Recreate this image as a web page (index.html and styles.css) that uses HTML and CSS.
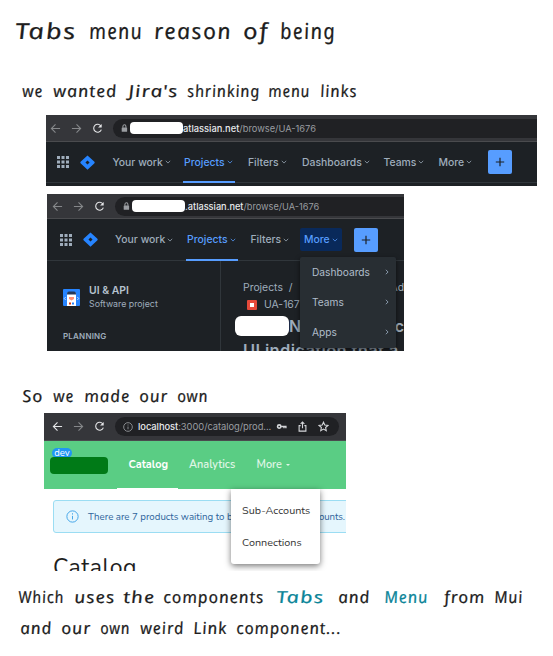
FILE: index.html
```html
<!DOCTYPE html>
<html lang="en">
<head>
<meta charset="utf-8">
<title>Tabs menu reason of being</title>
<link rel="stylesheet" href="styles.css">
</head>
<body>
<svg class="defs" width="0" height="0" aria-hidden="true">
  <symbol id="back" viewBox="0 0 12 12"><path d="M11 6H1.5M6 1.5 1.5 6 6 10.5"/></symbol>
  <symbol id="fwd" viewBox="0 0 12 12"><path d="M1 6h9.5M6 1.5 10.5 6 6 10.5"/></symbol>
  <symbol id="reload" viewBox="0 0 12 12"><path d="M9.8 3.4A4.3 4.3 0 1 0 10.2 7.2"/><path d="M10.6 1v4h-4z" fill="currentColor" stroke="none"/></symbol>
  <symbol id="lock" viewBox="0 0 8 10"><path d="M2.2 4V2.5a1.7 1.7 0 0 1 3.4 0V4"/><rect x=".8" y="3.8" width="6.2" height="5" rx=".6" fill="currentColor" stroke="none"/></symbol>
  <symbol id="chev" viewBox="0 0 6 6"><path d="M.8 1.8 3 4.1l2.2-2.3"/></symbol>
  <symbol id="chevr" viewBox="0 0 6 6"><path d="M1.8.8 4.1 3 1.8 5.2"/></symbol>
  <symbol id="apps" viewBox="0 0 12 12"><path fill="currentColor" stroke="none" d="M0 0h3v3H0zM4.5 0h3v3h-3zM9 0h3v3H9zM0 4.5h3v3H0zM4.5 4.5h3v3h-3zM9 4.5h3v3H9zM0 9h3v3H0zM4.5 9h3v3h-3zM9 9h3v3H9z"/></symbol>
  <symbol id="jira" viewBox="0 0 16 16"><path fill="#2684ff" stroke="none" fill-rule="evenodd" d="M8 .4 15.4 7.3q.6.7 0 1.4L8 15.6.6 8.7q-.6-.7 0-1.4zM8 5.8 5.8 8 8 10.2 10.2 8z"/></symbol>
  <symbol id="plus" viewBox="0 0 10 10"><path d="M5 .8v8.4M.8 5h8.4"/></symbol>
  <symbol id="info" viewBox="0 0 12 12"><circle cx="6" cy="6" r="5.2"/><path d="M6 5.4v3.3M6 3v1.2"/></symbol>
</svg>

<main class="board">
  <svg class="ink" width="553" height="60">
    <g class="words big" transform="translate(0 39) skewX(9)">
      <text x="16" textLength="62">Tabs</text><text x="90" textLength="54">menu</text><text x="155" textLength="78">reason</text><text x="244" textLength="26">of</text><text x="281" textLength="56">being</text>
    </g>
  </svg>
  <svg class="ink" width="553" height="55">
    <g class="words" transform="translate(0 37) skewX(9)">
      <text x="23" textLength="21">we</text><text x="54" textLength="64">wanted</text><text x="129" textLength="50">Jira's</text><text x="188" textLength="73">shrinking</text><text x="269" textLength="42">menu</text><text x="321" textLength="37">links</text>
    </g>
  </svg>

  <section class="shot wide">
    <div class="browser">
      <svg class="i"><use href="#back"/></svg><svg class="i"><use href="#fwd"/></svg><svg class="i lit"><use href="#reload"/></svg>
      <div class="address"><svg class="lock"><use href="#lock"/></svg><span class="redact"></span><span class="url"><b>atlassian.net</b>/browse/UA-1676</span></div>
    </div>
    <nav class="jnav">
      <svg class="apps"><use href="#apps"/></svg><svg class="jira"><use href="#jira"/></svg>
      <span>Your work<svg class="c"><use href="#chev"/></svg></span>
      <span class="on">Projects<svg class="c"><use href="#chev"/></svg></span>
      <span>Filters<svg class="c"><use href="#chev"/></svg></span>
      <span>Dashboards<svg class="c"><use href="#chev"/></svg></span>
      <span>Teams<svg class="c"><use href="#chev"/></svg></span>
      <span>More<svg class="c"><use href="#chev"/></svg></span>
      <div class="add"><svg><use href="#plus"/></svg></div>
    </nav>
  </section>

  <section class="shot narrow">
    <div class="browser">
      <svg class="i"><use href="#back"/></svg><svg class="i"><use href="#fwd"/></svg><svg class="i lit"><use href="#reload"/></svg>
      <div class="address"><svg class="lock"><use href="#lock"/></svg><span class="redact"></span><span class="url"><b>.atlassian.net</b>/browse/UA-1676</span></div>
    </div>
    <nav class="jnav">
      <svg class="apps"><use href="#apps"/></svg><svg class="jira"><use href="#jira"/></svg>
      <span>Your work<svg class="c"><use href="#chev"/></svg></span>
      <span class="on">Projects<svg class="c"><use href="#chev"/></svg></span>
      <span>Filters<svg class="c"><use href="#chev"/></svg></span>
      <span class="open">More<svg class="c"><use href="#chev"/></svg></span>
      <div class="add"><svg><use href="#plus"/></svg></div>
    </nav>
    <div class="jbody">
      <aside>
        <div class="project">
          <svg width="17" height="17" viewBox="0 0 17 17"><rect width="17" height="17" rx="1" fill="#2684ff"/><path d="M4 17V5q0-2 2-2h5q2 0 2 2v12z" fill="#fff"/><path d="M4 5.5v-1q0-2 2-2h5q2 0 2 2v1z" fill="#253858"/><path d="M6 8h5v2l-2.500 1.500L6 10z" fill="#ff8f73"/><path d="M6 13.500h2v2H6z" fill="#de350b"/><path d="M9 13.500h2v2H9z" fill="#2684ff"/><path d="M2.700 8 1.300 9.500 2.700 11M14.300 8l1.400 1.500-1.400 1.500" fill="none" stroke="#fff" stroke-width=".7"/></svg>
          <div><strong>UI &amp; API</strong><small>Software project</small></div>
        </div>
        <h4>PLANNING</h4>
      </aside>
      <div class="issue">
        <div class="crumbs"><span>Projects</span><span>/</span><span class="rest">Ad</span></div>
        <div class="key"><i></i><span>UA-167</span></div>
        <div class="summary"><span class="redact"></span><span>N</span><span class="tail">t c</span></div>
        <div class="summary second">UI indication that a</div>
      </div>
    </div>
    <div class="jmenu">
      <div>Dashboards<svg><use href="#chevr"/></svg></div>
      <div>Teams<svg><use href="#chevr"/></svg></div>
      <div>Apps<svg><use href="#chevr"/></svg></div>
    </div>
  </section>

  <svg class="ink" width="553" height="62">
    <g class="words" transform="translate(0 51) skewX(9)">
      <text x="23" textLength="21">So</text><text x="54" textLength="21">we</text><text x="85" textLength="46">made</text><text x="140" textLength="29">our</text><text x="178" textLength="31">own</text>
    </g>
  </svg>

  <section class="shot local">
    <div class="browser">
      <svg class="i lit"><use href="#back"/></svg><svg class="i"><use href="#fwd"/></svg><svg class="i lit"><use href="#reload"/></svg>
      <div class="address"><svg class="inf"><use href="#info"/></svg><span class="url"><b>localhost</b>:3000/catalog/prod...</span>
        <svg class="act" viewBox="0 0 12 12"><circle cx="3.5" cy="6" r="1.8" stroke-width="1.7"/><path d="M5.5 6h5.300v2M8.700 6v1.800" stroke-width="1.500"/></svg>
        <svg class="act" viewBox="0 0 12 12"><path d="M4 5H2.300v6h7.400V5H8M6 8V1.300M4 3.200l2-2 2 2"/></svg>
        <svg class="act" viewBox="0 0 12 12"><path d="m6 1.300 1.400 3.100 3.400.4-2.500 2.300.7 3.400L6 8.800l-3 1.700.7-3.400-2.500-2.300 3.400-.4z"/></svg>
      </div>
    </div>
    <nav class="gnav">
      <div class="brand"><em>dev</em><span></span></div>
      <span class="current">Catalog</span><span>Analytics</span><span>More<i></i></span>
    </nav>
    <div class="alert"><svg><use href="#info"/></svg><span class="msg">There are 7 products waiting to be</span><span class="end">ounts.</span></div>
    <h1>Catalog</h1>
    <div class="gmenu"><div>Sub-Accounts</div><div>Connections</div></div>
  </section>

  <svg class="ink" width="553" height="80">
    <g class="words" transform="translate(0 32) skewX(9)">
      <text x="19" textLength="46">Which</text><text x="75" textLength="41">uses</text><text x="124" textLength="32">the</text><text x="164" textLength="101">components</text><text class="teal" x="277" textLength="48">Tabs</text><text x="339" textLength="32">and</text><text class="teal" x="385" textLength="44">Menu</text><text x="445" textLength="41">from</text><text x="495" textLength="29">Mui</text>
    </g>
    <g class="words" transform="translate(0 63) skewX(9)">
      <text x="21" textLength="32">and</text><text x="62" textLength="30">our</text><text x="101" textLength="30">own</text><text x="141" textLength="44">weird</text><text x="194" textLength="34">Link</text><text x="237" textLength="105">component...</text>
    </g>
  </svg>
</main>
<script>
document.querySelectorAll('.ink text').forEach(function (t) {
  t.setAttribute('lengthAdjust', 'spacingAndGlyphs');
});
</script>
</body>
</html>
```
FILE: styles.css
```css
* { box-sizing: border-box; }
body { margin: 0; background: #fff; font-family: Inter, "Liberation Sans", sans-serif; }
svg { fill: none; stroke: currentColor; stroke-width: 1.2; flex: none; }
.defs { position: absolute; }
.board { width: 553px; height: 656px; overflow: hidden; display: flex; flex-direction: column; align-items: flex-start; }
.ink { display: block; overflow: visible; }
.words { font: italic 16.5px Virgil, Excalifont, "Noto Sans", sans-serif; letter-spacing: .9px; fill: #1e1e1e; stroke: #1e1e1e; stroke-width: .2; }
.words.big { font-size: 22px; letter-spacing: 1.4px; }
.words .teal { fill: #0c8599; stroke: #0c8599; }

.shot { position: relative; overflow: hidden; white-space: nowrap; }
.browser { display: flex; align-items: center; background: #35363a; color: #85878a; border-bottom: 1px solid #4a4b4e; }
.browser .i { width: 11px; height: 11px; margin-right: 10px; }
.browser .lit { color: #e4e5e7; }
.address { display: flex; align-items: center; flex: 1; height: 19px; background: #202124; border-radius: 10px 0 0 10px; font-size: 9.3px; color: #9a9da1; }
.address b { color: #e8eaed; font-weight: 500; }
.narrow .address { font-size: 9.2px; }
.lock { width: 7px; height: 9px; margin-left: 8px; color: #9a9da1; }
.redact { background: #fff; border-radius: 4px; flex: none; }
.address .redact { width: 53px; height: 12px; margin-left: 2px; }

.wide { width: 491px; height: 71px; margin-left: 46px; background: #1d2125; }
.wide .browser { height: 27px; padding-left: 4px; }
.jnav { display: grid; align-items: center; color: #9fadbc; font-size: 10.4px; font-weight: 500; border-bottom: 1px solid #30363b; }
.jnav > span { height: 100%; display: flex; align-items: center; position: relative; }
.jnav .c { width: 6px; height: 6px; margin-left: 2px; opacity: .75; stroke-width: 1; }
.jnav .on { color: #579dff; width: 50px; }
.jnav .on::after { content: ""; position: absolute; left: -1px; right: -1px; bottom: -1px; height: 2px; background: #579dff; }
.apps { width: 12px; height: 12px; }
.jira { width: 15px; height: 15px; margin-left: -1px; }
.add { width: 24px; height: 24px; border-radius: 2px; background: #579dff; color: #1d2125; display: grid; place-items: center; }
.add svg { width: 10px; height: 10px; }
.wide .jnav { height: 41px; padding-left: 11px; grid-template-columns: 24px 31.5px 71.5px 64px 54px 81.5px 55px 49.5px 24px; }

.narrow { width: 357px; height: 157px; margin: 8px 0 0 47px; background: #1d2125; }
.narrow .browser { height: 25px; padding-left: 5px; }
.narrow .jnav { height: 42px; padding-left: 12.5px; grid-template-columns: 24px 31.5px 72px 63.5px 49.5px 53.5px 24px; }
.narrow .jnav .open { height: 23px; width: 42px; padding-left: 4px; background: #09295a; color: #579dff; border-radius: 2px; }
.jbody { display: flex; height: 90px; overflow: hidden; }
aside { width: 174px; border-right: 1px solid #30363b; padding: 23px 0 0 16px; color: #9fadbc; flex: none; }
.project { display: flex; gap: 9px; align-items: center; height: 26px; }
.project svg { stroke: none; }
.project strong, .project small { display: block; line-height: 13px; }
.project strong { font-size: 10.4px; font-weight: 600; color: #b6c2cf; }
.project small { font-size: 8.8px; }
h4 { margin: 21px 0 0; font-size: 8px; line-height: 10px; font-weight: 600; letter-spacing: .2px; }
.issue { flex: 1; padding: 20px 0 0 14px; color: #9fadbc; overflow: hidden; }
.crumbs { display: flex; font-size: 10.4px; line-height: 14px; padding-left: 8px; }
.crumbs span:first-child { width: 46px; }
.crumbs .rest { margin-left: 98px; }
.key { display: flex; align-items: center; padding-left: 12px; font-size: 10.4px; line-height: 20px; gap: 7px; }
.key i { width: 10px; height: 10px; border: 3px solid #e5493a; border-radius: 1px; background: #fff; }
.summary { display: flex; align-items: center; font-size: 16px; line-height: 20px; font-weight: 600; height: 20px; margin-top: 1px; }
.summary .redact { width: 54px; height: 20px; border-radius: 6px; }
.summary .tail { margin-left: 84px; }
.summary.second { padding-left: 8px; margin-top: 4px; font-size: 16.5px; letter-spacing: .35px; }
.jmenu { position: absolute; left: 253px; top: 63px; width: 96px; height: 91px; border-radius: 2px; background: #282e33; color: #b0bdca; font-size: 10.2px; box-shadow: 0 2px 5px #0009; }
.jmenu div { display: flex; align-items: center; justify-content: space-between; height: 30px; padding: 0 6px 1px 12px; }
.jmenu svg { width: 6px; height: 6px; color: #8696a7; stroke-width: 1; }

.local { width: 302px; height: 158px; margin-left: 44px; font-family: Nunito, "Open Sans", sans-serif; }
.local .browser { height: 28px; padding-left: 8px; font-family: Inter, sans-serif; }
.local .address { flex: none; width: 224px; border-radius: 10px; font-size: 9.4px; }
.inf { width: 10px; height: 10px; margin: 0 5px 0 8px; stroke-width: 1; }
.local .url { width: 144px; letter-spacing: -.06px; }
.act { width: 11px; height: 11px; margin-right: 10px; color: #d4d6d9; }
.gnav { display: grid; grid-template-columns: 78.5px 60.5px 67.500px 50px; height: 48px; padding: 0 0 1px 6px; background: #5acd84; color: #e0f6e7; font-size: 10.9px; font-weight: 600; }
.gnav > span { display: flex; align-items: center; height: 100%; position: relative; }
.gnav .current { color: #fff; font-weight: 700; }
.gnav .current::after { content: ""; position: absolute; left: -12px; width: 61px; height: 1px; bottom: -1px; background: #fff; }
.gnav i { border: 2px solid transparent; border-top-color: currentColor; margin: 2px 0 0 4px; }
.brand { padding-top: 7px; }
.brand em { display: block; width: 20px; height: 10px; margin-left: 2px; background: #2196f3; color: #fff; border-radius: 5px; font: 9.5px/9px Nunito, "Open Sans", sans-serif; text-align: center; }
.brand span { display: block; width: 58px; height: 17px; margin-top: -1px; border-radius: 4px; background: #007a17; position: relative; }
.alert { display: flex; align-items: center; height: 33px; margin: 11px 0 0 9px; width: 310px; padding-left: 12px; background: #e5f6fd; border: 1px solid #9bddf3; border-radius: 3px; color: #2f659c; font-size: 9.7px; }
.alert svg { width: 13px; height: 13px; margin-right: 9px; color: #42a5e8; stroke-width: .9; }
.alert .msg { width: 144px; }
.alert .end { margin-left: 87px; letter-spacing: -.1px; }
.local h1 { margin: 21px 0 0 9px; font: 400 23px/28px Nunito, Lato, sans-serif; letter-spacing: .5px; color: #1e1e1e; }
.gmenu { position: absolute; left: 187px; top: 76px; width: 89px; height: 75px; padding-top: 5px; background: #fff; border-radius: 0 0 3px 3px; font-size: 10.8px; color: #333; box-shadow: 0 2px 6px #0008; }
.gmenu div { height: 32px; line-height: 33px; padding-left: 11px; }
```
